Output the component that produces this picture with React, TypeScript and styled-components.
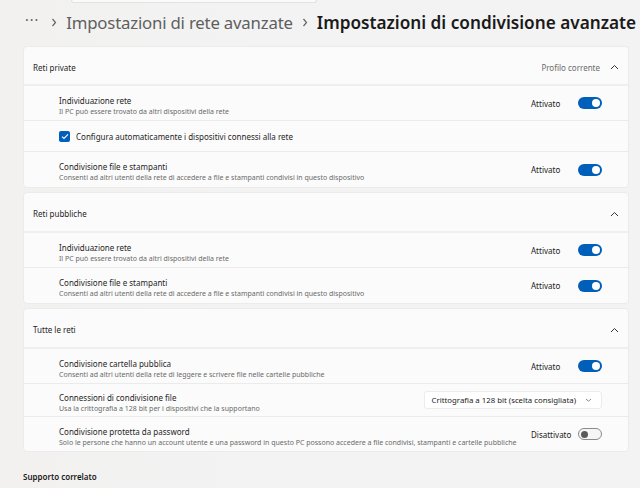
import React from "react";
import styled, { createGlobalStyle } from "styled-components";

const GlobalStyle = createGlobalStyle`
  *, *::before, *::after {
    box-sizing: border-box;
  }
  html, body {
    margin: 0;
    padding: 0;
    background: #f3f3f3;
    font-family: "Noto Sans", "Open Sans", sans-serif;
    color: #1b1b1b;
  }
`;

const Page = styled.div`
  width: 640px;
  height: 488px;
  overflow: hidden;
  padding: 0 11px 0 23px;
  background: linear-gradient(90deg, #f2f1f0 0%, #f3f3f3 40%);
`;

const SearchEdge = styled.div`
  margin-left: 48px;
  width: 246px;
  height: 3px;
  border: 1px solid #e2e2e2;
  border-top: none;
  border-radius: 0 0 4px 4px;
  background: #fafafa;
`;

const Crumbs = styled.div`
  display: flex;
  align-items: center;
  height: 38px;
  white-space: nowrap;
  overflow: visible;

  & > * {
    flex-shrink: 0;
  }
`;

const Dots = styled.span`
  font-size: 14px;
  color: #5c5c5c;
  letter-spacing: 1px;
  margin-left: 2px;
  margin-right: 3px;
  position: relative;
  top: -3px;
`;

const Crumb = styled.span<{ $current?: boolean }>`
  font-size: ${(p) => (p.$current ? "17.2px" : "16.8px")};
  color: ${(p) => (p.$current ? "#1a1a1a" : "#5f5f5f")};
  font-weight: ${(p) => (p.$current ? 600 : 400)};
  letter-spacing: ${(p) => (p.$current ? "0" : "-0.2px")};
`;

const Sep = styled.span`
  display: inline-flex;
  width: 24px;
  justify-content: center;
  color: #6a6a6a;
`;

const Stack = styled.div`
  display: flex;
  flex-direction: column;
  gap: 4px;
  margin-top: 5px;
`;

const Card = styled.section`
  background: #fbfbfb;
  border: 1px solid #ebebeb;
  border-radius: 4px;
`;

const Header = styled.div<{ $h: number }>`
  display: flex;
  align-items: center;
  height: ${(p) => p.$h}px;
  padding: 3px 9px 0 9px;
  border-bottom: 2px solid #efefef;
  font-size: 8px;
  color: #1f1f1f;
`;

const HeaderRight = styled.div`
  margin-left: auto;
  display: flex;
  align-items: center;
  gap: 10px;
  color: #6b6b6b;
  font-size: 8px;
`;

const Row = styled.div<{ $h: number; $last?: boolean }>`
  display: flex;
  align-items: center;
  height: ${(p) => p.$h}px;
  padding: 0 26px 0 35px;
  border-bottom: ${(p) => (p.$last ? "none" : "1px solid #ebebeb")};
`;

const Texts = styled.div`
  display: flex;
  flex-direction: column;
  gap: 1px;
  min-width: 0;
  padding-top: 4px;
`;

const Title = styled.div`
  font-size: 8px;
  color: #1f1f1f;
  line-height: 11px;
`;

const Sub = styled.div`
  font-size: 7px;
  color: #6a6a6a;
  line-height: 9px;
  white-space: nowrap;
`;

const Control = styled.div`
  margin-left: auto;
  display: flex;
  align-items: center;
  flex-shrink: 0;
  padding-left: 8px;
`;

const State = styled.span`
  width: 47px;
  font-size: 8px;
  color: #222;
`;

const Toggle = styled.div<{ $on: boolean }>`
  width: 24px;
  height: 12px;
  border-radius: 7px;
  display: flex;
  align-items: center;
  padding: 0 2px;
  justify-content: ${(p) => (p.$on ? "flex-end" : "flex-start")};
  background: ${(p) => (p.$on ? "#005fb8" : "#f6f6f6")};
  border: ${(p) => (p.$on ? "none" : "1px solid #8a8a8a")};

  &::after {
    content: "";
    width: ${(p) => (p.$on ? 8 : 7)}px;
    height: ${(p) => (p.$on ? 8 : 7)}px;
    border-radius: 50%;
    background: ${(p) => (p.$on ? "#ffffff" : "#5a5a5a")};
  }
`;

const CheckBox = styled.div`
  width: 11px;
  height: 11px;
  border-radius: 2px;
  background: #005fb8;
  display: flex;
  align-items: center;
  justify-content: center;
  margin-right: 6px;
`;

const CheckLabel = styled.span`
  font-size: 8px;
  color: #1f1f1f;
`;

const Select = styled.div`
  display: flex;
  align-items: center;
  gap: 9px;
  height: 18px;
  padding: 0 9px 0 7px;
  background: #ffffff;
  border: 1px solid #ececec;
  border-radius: 3px;
  font-size: 7.8px;
  color: #222;
`;

const Related = styled.div`
  margin-top: 19px;
  font-size: 8px;
  font-weight: 600;
  color: #1a1a1a;
`;

const ChevronUp = () => (
  <svg width="9" height="6" viewBox="0 0 9 6">
    <path d="M1 5 L4.5 1.5 L8 5" fill="none" stroke="#333" strokeWidth="1" />
  </svg>
);

const ChevronDown = () => (
  <svg width="7" height="4" viewBox="0 0 7 4">
    <path d="M1 1 L3.5 3.2 L6 1" fill="none" stroke="#777" strokeWidth="0.9" />
  </svg>
);

const Arrow = () => (
  <svg width="6" height="9" viewBox="0 0 6 9">
    <path d="M1.5 1 L4.5 4.5 L1.5 8" fill="none" stroke="#666" strokeWidth="1.2" />
  </svg>
);

const Check = () => (
  <svg width="8" height="7" viewBox="0 0 8 7">
    <path d="M1 3.6 L3 5.5 L7 1.3" fill="none" stroke="#fff" strokeWidth="1.1" />
  </svg>
);

type SettingProps = {
  title: string;
  sub: string;
  h: number;
  last?: boolean;
  children?: React.ReactNode;
};

const Setting = ({ title, sub, h, last, children }: SettingProps) => (
  <Row $h={h} $last={last}>
    <Texts>
      <Title>{title}</Title>
      <Sub>{sub}</Sub>
    </Texts>
    <Control>{children}</Control>
  </Row>
);

const Switch = ({ on }: { on: boolean }) => (
  <>
    <State>{on ? "Attivato" : "Disattivato"}</State>
    <Toggle $on={on} />
  </>
);

const FOUND = "Il PC può essere trovato da altri dispositivi della rete";
const SHARE =
  "Consenti ad altri utenti della rete di accedere a file e stampanti condivisi in questo dispositivo";

export default function App() {
  return (
    <Page>
      <GlobalStyle />
      <SearchEdge />
      <Crumbs>
        <Dots>···</Dots>
        <Sep>
          <Arrow />
        </Sep>
        <Crumb>Impostazioni di rete avanzate</Crumb>
        <Sep>
          <Arrow />
        </Sep>
        <Crumb $current>Impostazioni di condivisione avanzate</Crumb>
      </Crumbs>

      <Stack>
        <Card>
          <Header $h={39}>
            Reti private
            <HeaderRight>
              Profilo corrente
              <ChevronUp />
            </HeaderRight>
          </Header>
          <Setting title="Individuazione rete" sub={FOUND} h={35}>
            <Switch on />
          </Setting>
          <Row $h={31}>
            <CheckBox>
              <Check />
            </CheckBox>
            <CheckLabel>
              Configura automaticamente i dispositivi connessi alla rete
            </CheckLabel>
          </Row>
          <Setting title="Condivisione file e stampanti" sub={SHARE} h={35} last>
            <Switch on />
          </Setting>
        </Card>

        <Card>
          <Header $h={40}>
            Reti pubbliche
            <HeaderRight>
              <ChevronUp />
            </HeaderRight>
          </Header>
          <Setting title="Individuazione rete" sub={FOUND} h={35}>
            <Switch on />
          </Setting>
          <Setting title="Condivisione file e stampanti" sub={SHARE} h={35} last>
            <Switch on />
          </Setting>
        </Card>

        <Card>
          <Header $h={40}>
            Tutte le reti
            <HeaderRight>
              <ChevronUp />
            </HeaderRight>
          </Header>
          <Setting
            title="Condivisione cartella pubblica"
            sub="Consenti ad altri utenti della rete di leggere e scrivere file nelle cartelle pubbliche"
            h={35}
          >
            <Switch on />
          </Setting>
          <Setting
            title="Connessioni di condivisione file"
            sub="Usa la crittografia a 128 bit per i dispositivi che la supportano"
            h={33}
          >
            <Select>
              Crittografia a 128 bit (scelta consigliata)
              <ChevronDown />
            </Select>
          </Setting>
          <Setting
            title="Condivisione protetta da password"
            sub="Solo le persone che hanno un account utente e una password in questo PC possono accedere a file condivisi, stampanti e cartelle pubbliche"
            h={34}
            last
          >
            <Switch on={false} />
          </Setting>
        </Card>
      </Stack>

      <Related>Supporto correlato</Related>
    </Page>
  );
}
